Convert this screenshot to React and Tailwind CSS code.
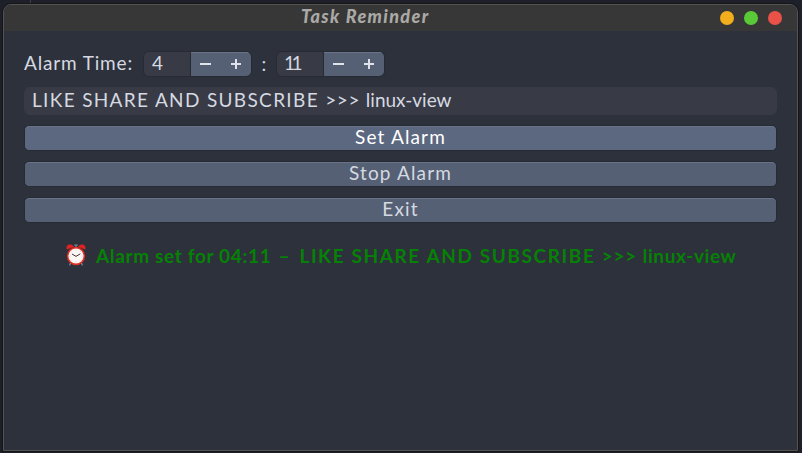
const buttonBase =
  'flex h-[26px] w-full items-center justify-center rounded-[5px] border border-[#262a32] pb-[3px] text-[19px] leading-none tracking-[1.15px] shadow-[inset_0_1px_0_#69748a]';

function Spinner({ value, narrow }) {
  return (
    <div className="flex h-[26px] w-[109px] overflow-hidden rounded-[6px] border border-[#262a32] bg-[#383b45]">
      <div className="flex w-[47px] shrink-0 items-center border-r border-[#262a32] pb-[3px] pl-2">
        <span className={narrow ? '-ml-px text-[19px] leading-none tracking-[-3.5px]' : 'text-[19px] leading-none'}>{value}</span>
      </div>
      <div className="flex flex-1 bg-[#566074] shadow-[inset_0_1px_0_#69748a]">
        <svg className="h-[24px] w-[60px]" viewBox="0 0 60 24" fill="#dfe2e8" shapeRendering="crispEdges">
          <rect x="9" y="11" width="11" height="2" />
          <rect x="40" y="11" width="10" height="2" />
          <rect x="44" y="7" width="2" height="10" />
        </svg>
      </div>
    </div>
  );
}

function AlarmClock() {
  return (
    <svg className="h-[22px] w-[20px] shrink-0" viewBox="0 0 20 22">
      <path d="M5 18 3.7 21M15 18l1.3 3M10 3V1M8.7 1h2.6" stroke="#7893a0" strokeWidth="1.2" fill="none" strokeLinecap="round" />
      <path d="M.8 5.4C-.1 2.6 1.2.7 3.6.5 5.6.3 7.4 1.3 8 2.8ZM19.2 5.4c.9-2.8-.4-4.7-2.8-4.9-2-.2-3.8.8-4.4 2.3Z" fill="#e02222" />
      <circle cx="10" cy="12" r="9.2" fill="#e02c22" />
      <circle cx="10" cy="12" r="7.6" fill="#fbf6f4" />
      <path d="M10 5.5v1M10 17.5v1M3.5 12h1M15.5 12h1M5.4 7.4l.7.7M13.9 15.9l.7.7M5.4 16.6l.7-.7M13.9 8.1l.7-.7" stroke="#b8b8b8" strokeWidth=".6" />
      <path d="m6.3 10.2 3.7 2.2 4-2.4" stroke="#433434" strokeWidth="1" fill="none" strokeLinecap="round" />
    </svg>
  );
}

export default function App() {
  return (
    <div className="h-[453px] w-[802px] overflow-hidden bg-[#1d2029] pl-[3px] font-[Lato,sans-serif] text-[#d5d9e1]">
      <div className="ml-[27px] h-1 w-px bg-[#3c3e45]" />
      <div className="flex h-[447px] w-[795px] flex-col overflow-hidden rounded-t-[8px] border border-[#55534f] bg-[#2d313b] shadow-[0_0_0_1px_#15161b]">
        <header className="flex h-[26px] shrink-0 items-center justify-between bg-[#373737] pl-[297px]">
          <h1 className="whitespace-nowrap pb-[4px] text-[18px] font-black italic leading-none tracking-[1.35px] text-[#aaa9a5]">Task Reminder</h1>
          <div className="flex justify-end gap-[10px] pr-[15px]">
            <span className="size-[14px] rounded-full bg-[#f2ae1c]" />
            <span className="size-[14px] rounded-full bg-[#5ac938]" />
            <span className="size-[14px] rounded-full bg-[#ea5149]" />
          </div>
        </header>
        <main className="flex flex-col px-[20px] pt-5">
          <div className="flex h-[26px] items-center">
            <span className="w-[119px] whitespace-nowrap pb-[3px] text-[19px] leading-none tracking-[0.85px]">Alarm Time:</span>
            <Spinner value="4" />
            <span className="w-[24px] pb-[2px] text-center text-[19px] leading-none">:</span>
            <Spinner value="11" narrow />
          </div>
          <div className="mt-[10px] flex h-[28px] w-[753px] items-center rounded-[6px] bg-[#383b45] pb-[3px] pl-[8px]">
            <span className="whitespace-pre text-[19px] leading-none">
              <span className="tracking-[1.33px]">LIKE SHARE AND SUBSCRIBE </span>
              <span className="tracking-[0.7px]">&gt;&gt;&gt; </span>
              <span>linux-view</span>
            </span>
          </div>
          <div className="mt-[10px] flex w-[753px] flex-col gap-[10px]">
            <button className={`${buttonBase} bg-[#5c6880] text-white`}>Set Alarm</button>
            <button className={`${buttonBase} bg-[#566074]`}>Stop Alarm</button>
            <button className={`${buttonBase} bg-[#566074]`}>Exit</button>
          </div>
          <div className="mt-[20px] flex h-[24px] items-center pl-[42px] text-[#058205]">
            <AlarmClock />
            <span className="ml-[10px] whitespace-pre text-[19px] font-bold leading-none">
              <span className="tracking-[0.65px]">Alarm set for 04:11</span>
              <span className="tracking-[2.6px]"> – </span>
              <span className="tracking-[1.6px]">LIKE SHARE AND SUBSCRIBE </span>
              <span className="tracking-[0.8px]">&gt;&gt;&gt; </span>
              <span className="tracking-[0.6px]">linux-view</span>
            </span>
          </div>
        </main>
      </div>
    </div>
  );
}
